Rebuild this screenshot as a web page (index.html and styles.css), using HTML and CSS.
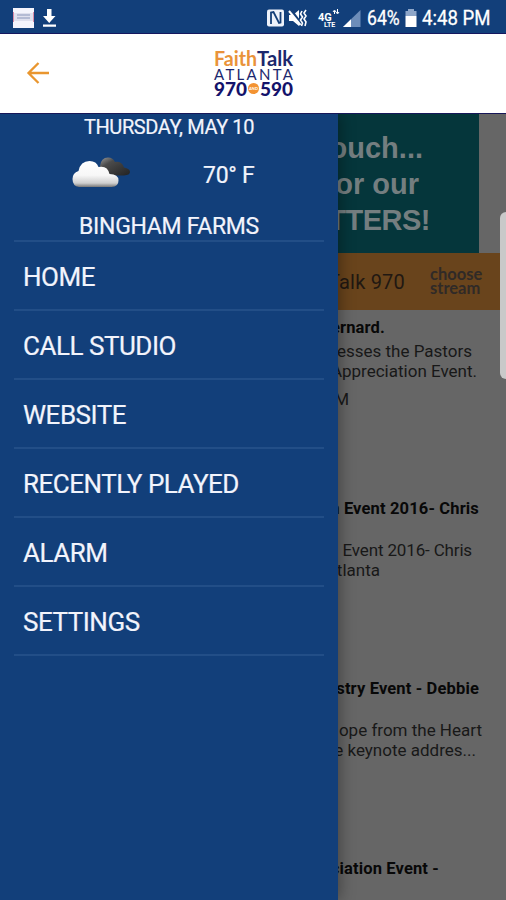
FILE: index.html
```html
<!DOCTYPE html>
<html lang="en">
<head>
<meta charset="utf-8">
<title>FaithTalk Atlanta</title>
<link rel="stylesheet" href="styles.css">
</head>
<body>
<div class="app">
  <header class="status">
    <svg class="status-left" width="60" height="34" viewBox="0 0 60 34">
      <rect x="13" y="8" width="21" height="20" fill="#f4f4fc"/>
      <rect x="14" y="13" width="19" height="8" fill="#dfe0ee"/>
      <path d="M13.500 12v10M33.500 12v10" stroke="#d98ba8"/>
      <path d="M17 15h13M17 18h13" stroke="#a6aecb" stroke-width="1.500"/>
      <path d="M47 9h4.500v7h4l-6.300 7-6.200-7h4zM43 24.500h13v2.300H43z" fill="#fff"/>
    </svg>
    <div class="status-right">
      <svg width="96" height="34" viewBox="0 0 96 34">
        <rect x="1" y="9.500" width="17" height="17" rx="2" fill="#eef2fa"/>
        <path d="M5 24V12.500l2.500-.5 5.500 11 1.500-.5V12" fill="none" stroke="#143f78" stroke-width="1.800"/>
        <path d="M23 15h4l6-5v16l-6-5h-4z" fill="#fff"/>
        <path d="M24 9.500l12 16" stroke="#143f78" stroke-width="3.500"/>
        <path d="M23 11l11.500 14" stroke="#fff" stroke-width="2"/>
        <path d="M36 11l-1.500 3 2 3-2 3 2 3-1 3M40 10l-2 3 2 3-2 3 2 3-1 4" fill="none" stroke="#fff" stroke-width="1.600"/>
        <text x="52" y="20.500" class="net">4G</text>
        <text x="58" y="27" class="lte">LTE</text>
        <path d="M68.500 14v-3M67 12l1.500-2 1.500 2M71.500 9v4M70 12l1.500 2 1.500-2" fill="none" stroke="#fff"/>
        <path d="M77 27L94.500 10v17z" fill="#6d8db9"/>
        <path d="M77 27l8-7.700V27z" fill="#fff"/>
      </svg>
      <span class="pct">64%</span>
      <svg class="battery" width="12" height="20" viewBox="0 0 12 20"><path d="M3 1h6v2h2.500v5H.5V3H3z" fill="#8da6c9"/><path d="M.5 8h11v11H.5z" fill="#fff"/></svg>
      <span class="clock">4:48 PM</span>
    </div>
  </header>
  <div class="topbar">
    <svg class="back" width="24" height="24" viewBox="0 0 24 24"><path d="M23 12H2M12.500 2L2.500 12l10 10" fill="none" stroke="#e9962f" stroke-width="2.300"/></svg>
    <svg class="logo" width="84" height="58" viewBox="0 -8 84 58">
      <text x="1" y="17" textLength="43" lengthAdjust="spacingAndGlyphs" class="logo-name orange">Faith</text>
      <text x="44" y="17" textLength="36" lengthAdjust="spacingAndGlyphs" class="logo-name navy">Talk</text>
      <text x="1" y="31" textLength="79" class="logo-city">ATLANTA</text>
      <text x="1" y="46.500" textLength="33" lengthAdjust="spacingAndGlyphs" class="logo-num">970</text>
      <circle cx="40.500" cy="39.500" r="5.500" fill="#f39332"/>
      <text x="40.500" y="41" text-anchor="middle" class="logo-and">AND</text>
      <text x="47" y="46.500" textLength="33" lengthAdjust="spacingAndGlyphs" class="logo-num">590</text>
    </svg>
  </div>
  <div class="stage">
    <main class="feed">
      <section class="banner">
        <p class="b1">touch...</p>
        <p class="b2">for our</p>
        <p class="b3">TTERS!</p>
      </section>
      <section class="stream">
        <span class="station">Talk 970</span>
        <span class="choose">choose<br>stream</span>
      </section>
      <article class="item first">
        <h2 class="t1">Bernard.</h2>
        <p class="end-472">resses the Pastors</p>
        <p class="end-477">Appreciation Event.</p>
        <p class="time">PM</p>
      </article>
      <article class="item">
        <h2 class="t2">n Event 2016- Chris</h2>
        <p class="end-472 even">Event 2016- Chris</p>
        <p class="end-379">Atlanta</p>
      </article>
      <article class="item">
        <h2 class="t2">istry Event - Debbie</h2>
        <p class="end-482">ope from the Heart</p>
        <p class="end-475">e keynote addres...</p>
      </article>
      <article class="item last">
        <h2 class="t4">ciation Event -</h2>
      </article>
    </main>
    <aside class="drawer">
      <div class="date">THURSDAY, MAY 10</div>
      <div class="weather">
        <svg width="62" height="34" viewBox="0 0 62 34">
          <defs>
            <linearGradient id="cloud" x1="0" y1="0" x2="0" y2="1"><stop offset="0" stop-color="#fff"/><stop offset=".55" stop-color="#f7f7f7"/><stop offset=".85" stop-color="#cfcfcf"/><stop offset="1" stop-color="#777"/></linearGradient>
            <linearGradient id="dark" x1="0" y1="0" x2="1" y2="1"><stop offset="0" stop-color="#9a9a9a"/><stop offset=".3" stop-color="#4b4b4b"/><stop offset="1" stop-color="#222"/></linearGradient>
          </defs>
          <path d="M29 10Q30 1.500 37 1.500q5 0 7 4.500 7-1 9 5.500 6 1 6 4.500 0 3-6 3.500H38q-9-2-9-9.500z" fill="url(#dark)"/>
          <path d="M8 31q-6.500-1-6.500-8 0-6 6-8 2-10 11-10 7 0 9 6 9-2 11 7 9 0 9 6.500 0 6.500-7 6.500z" fill="url(#cloud)"/>
        </svg>
        <span class="temp">70° F</span>
      </div>
      <div class="place">BINGHAM FARMS</div>
      <nav class="menu">
        <a>HOME</a>
        <a>CALL STUDIO</a>
        <a>WEBSITE</a>
        <a>RECENTLY PLAYED</a>
        <a>ALARM</a>
        <a>SETTINGS</a>
      </nav>
    </aside>
    <div class="edge"></div>
  </div>
</div>
</body>
</html>
```

FILE: styles.css
```css
* { box-sizing: border-box; }
body { margin: 0; font-family: Roboto, "Liberation Sans", sans-serif; }
h2, p { margin: 0; }
.app { width: 506px; height: 900px; overflow: hidden; display: flex; flex-direction: column; }
.status { height: 34px; flex: none; background: #123f7a; border-bottom: 1px solid #15185f; display: flex; justify-content: space-between; color: #fff; }
.status-right { display: flex; width: 240px; line-height: 37px; font-size: 21px; white-space: nowrap; }
.status-right > * { flex: none; }
.net { font: bold 11px Roboto, sans-serif; fill: #fff; }
.lte { font: bold 7px Roboto, sans-serif; fill: #fff; }
.pct { margin-left: 5px; width: 35px; font-size: 20px; transform: scaleX(.88); transform-origin: left; -webkit-text-stroke: .3px #fff; }
.battery { margin: 8px 0 0 3px; }
.clock { margin-left: 5px; transform: scaleX(.885); transform-origin: left; -webkit-text-stroke: .3px #fff; }
.topbar { height: 79px; flex: none; background: #fff; display: flex; align-items: flex-start; }
.back { margin: 27px 0 0 26px; }
.logo { margin: 7px 0 0 163px; }
.logo-name { font: bold 20px Lato, sans-serif; }
.orange { fill: #e9933a; }
.navy { fill: #1c286e; }
.logo-city { font: 15px Lato, sans-serif; fill: #1c286e; }
.logo-num { font: 900 18.5px Lato, sans-serif; fill: #14136b; }
.logo-and { font: bold 4px Lato, sans-serif; fill: #fff; }
.stage { position: relative; flex: 1; border-top: 1px solid #171759; overflow: hidden; }
.feed { height: 786px; background: #666; color: #181818; text-align: right; white-space: nowrap; }
.banner { height: 139px; background: linear-gradient(90deg, #05363b 479px, #666 479px); color: #747e80; font: bold 29px/36px "Liberation Sans", sans-serif; padding-top: 16px; }
.b1 { padding-right: 83px; }
.b2 { padding-right: 87px; }
.b3 { padding-right: 76px; letter-spacing: -.5px; }
.stream { height: 57px; background: #69441c; display: flex; justify-content: flex-end; align-items: center; }
.station { font-size: 20px; margin-right: 25px; color: #211812; letter-spacing: .2px; }
.choose { width: 52px; margin: -2px 24px 0 0; font: bold 16.5px/14px Lato, sans-serif; text-align: left; color: #302a27; }
.item { height: 180px; padding-top: 8px; font-size: 17px; line-height: 20px; }
.item h2 { font-size: 16.5px; letter-spacing: .15px; line-height: 22px; font-weight: 700; color: #080808; margin-bottom: 20px; }
.item.first h2 { margin-bottom: 3px; line-height: 20px; }
.item .t1 { padding-right: 121px; }
.item .t2 { padding-right: 27px; }
.item .t4 { padding-right: 67px; }
.end-472 { padding-right: 34px; }
.even { letter-spacing: -.15px; }
.end-477 { padding-right: 29px; }
.end-379 { padding-right: 126px; }
.end-482 { padding-right: 24px; }
.end-475 { padding-right: 30px; }
.time { padding-right: 157px; margin-top: 8px; }
.drawer { position: absolute; left: 0; top: 0; width: 338px; height: 786px; background: #123f7a; color: #f2f4fc; box-shadow: 2px 0 14px rgba(0,0,0,.35); -webkit-text-stroke: .2px #f2f4fc; }
.date { height: 28px; line-height: 27px; font-size: 20px; text-align: center; letter-spacing: -.4px; }
.weather { height: 69px; display: flex; align-items: flex-start; padding: 14px 0 0 71px; }
.temp { font-size: 23px; line-height: 40px; margin-left: 70px; letter-spacing: -.3px; }
.place { height: 29px; line-height: 31px; font-size: 23px; text-align: center; letter-spacing: -.3px; }
.menu { margin: 0 14px; border-top: 2px solid #224e87; }
.menu a { display: block; height: 69px; line-height: 71px; padding-left: 9px; font-size: 26px; letter-spacing: -.48px; border-bottom: 2px solid #224e87; }
.edge { position: absolute; right: 0; top: 98px; width: 6px; height: 167px; background: #c9c9c9; border-radius: 6px 0 0 6px; }
```
